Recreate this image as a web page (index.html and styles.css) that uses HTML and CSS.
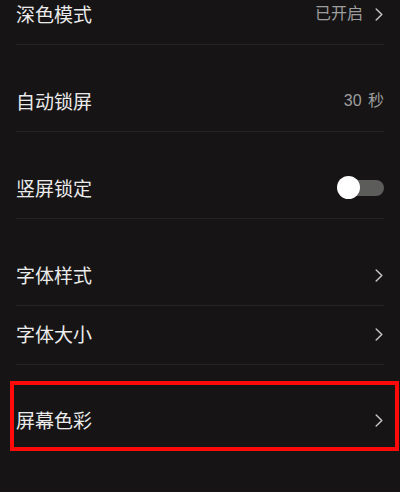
FILE: index.html
```html
<!DOCTYPE html>
<html lang="zh-CN">
<head>
<meta charset="utf-8">
<title>显示设置</title>
<link rel="stylesheet" href="styles.css">
</head>
<body>
<div class="screen">
  <ul class="list">
    <li class="row row-first">
      <span class="label">深色模式</span>
      <span class="trail"><span class="value">已开启</span><svg class="chev" viewBox="0 0 8 13" width="8" height="13"><path d="M1.2 1 L6.8 6.5 L1.2 12" fill="none" stroke="#c4c4c4" stroke-width="1.5" stroke-linecap="round" stroke-linejoin="round"/></svg></span>
    </li>
    <li class="row">
      <span class="label">自动锁屏</span>
      <span class="trail"><span class="value">30 秒</span></span>
    </li>
    <li class="row">
      <span class="label">竖屏锁定</span>
      <span class="trail"><span class="switch"><span class="knob"></span></span></span>
    </li>
    <li class="row">
      <span class="label">字体样式</span>
      <span class="trail"><svg class="chev" viewBox="0 0 8 13" width="8" height="13"><path d="M1.2 1 L6.8 6.5 L1.2 12" fill="none" stroke="#c4c4c4" stroke-width="1.5" stroke-linecap="round" stroke-linejoin="round"/></svg></span>
    </li>
    <li class="row row-short">
      <span class="label">字体大小</span>
      <span class="trail"><svg class="chev" viewBox="0 0 8 13" width="8" height="13"><path d="M1.2 1 L6.8 6.5 L1.2 12" fill="none" stroke="#c4c4c4" stroke-width="1.5" stroke-linecap="round" stroke-linejoin="round"/></svg></span>
    </li>
    <li class="row row-last">
      <span class="label">屏幕色彩</span>
      <span class="trail"><svg class="chev" viewBox="0 0 8 13" width="8" height="13"><path d="M1.2 1 L6.8 6.5 L1.2 12" fill="none" stroke="#c4c4c4" stroke-width="1.5" stroke-linecap="round" stroke-linejoin="round"/></svg></span>
    </li>
  </ul>
  <div class="highlight"></div>
</div>
</body>
</html>
```
FILE: styles.css
```css
html, body {
  margin: 0;
  padding: 0;
  background: #161415;
}
body {
  font-family: "Noto Sans CJK SC", "Noto Sans", sans-serif;
  color: #e6e6e6;
}
.screen {
  position: relative;
  width: 400px;
  height: 492px;
  overflow: hidden;
  background: #161415;
}
.list {
  list-style: none;
  margin: 0;
  padding: 0 16px;
}
.row {
  display: flex;
  align-items: center;
  justify-content: space-between;
  height: 28px;
  padding: 42px 0 16px;
  border-bottom: 1px solid #252324;
}
.row-first {
  padding-top: 0;
}
.row-short {
  padding-top: 14px;
}
.row-last {
  border-bottom: none;
  padding-top: 41px;
}
.label {
  font-size: 19px;
  line-height: 28px;
  color: #ebebeb;
}
.trail {
  display: flex;
  align-items: center;
  gap: 12px;
}
.value {
  font-family: "Liberation Sans", "Noto Sans CJK SC", sans-serif;
  font-size: 16px;
  line-height: 28px;
  color: #9e9e9e;
  word-spacing: 2px;
}
.chev {
  display: block;
  margin-right: 1px;
}
.switch {
  position: relative;
  display: block;
  width: 44px;
  height: 16px;
  border-radius: 8px;
  background: #5c5d5b;
}
.knob {
  position: absolute;
  left: -3px;
  top: -4px;
  width: 23px;
  height: 23px;
  border-radius: 50%;
  background: #ffffff;
}
.highlight {
  position: absolute;
  left: 10px;
  top: 381px;
  width: 381px;
  height: 62px;
  border: 4px solid #ff0a0a;
}
```
